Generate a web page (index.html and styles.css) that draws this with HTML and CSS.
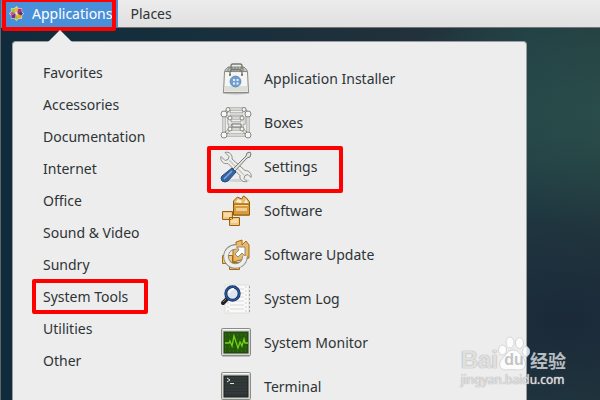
FILE: index.html
```html
<!DOCTYPE html>
<html lang="en">
  <head>
    <meta charset="UTF-8" />
    <title>Applications</title>
    <link rel="stylesheet" href="styles.css">
  </head>
  <body>
    <header class="panel">
      <button type="button" class="panel-button active marked">
        <svg class="logo" viewBox="0 0 16 16">
          <path d="M8 0l2.300 2.500H14V6l2 2-2 2v3.500h-3.700L8 16l-2.300-2.500H2V10L0 8l2-2V2.500h3.700z" fill="#f0dfc4" />
          <path d="M2.500 3H7v4.500H2.500z" fill="#a9c23c" />
          <path d="M9 3h4.500v4.500H9z" fill="#a8327f" />
          <path d="M2.500 8.500H7V13H2.500z" fill="#7a2f86" />
          <path d="M9 8.500h4.500V13H9z" fill="#efa724" />
          <path d="M8 1l2 2-2 4-2-4z" fill="#efb63a" />
          <path d="M15 8l-2 2-4-2 4-2z" fill="#5b2f84" />
          <path d="M8 15l-2-2 2-4 2 4z" fill="#a7bf3b" />
          <path d="M1 8l2-2 4 2-4 2z" fill="#c0589a" />
        </svg>
        Applications
      </button>
      <button type="button" class="panel-button">Places</button>
    </header>

    <main class="menu">
      <nav class="categories">
        <a href="#">Favorites</a>
        <a href="#">Accessories</a>
        <a href="#">Documentation</a>
        <a href="#">Internet</a>
        <a href="#">Office</a>
        <a href="#">Sound &amp; Video</a>
        <a href="#">Sundry</a>
        <a href="#" class="marked">System Tools</a>
        <a href="#">Utilities</a>
        <a href="#">Other</a>
      </nav>

      <nav class="apps">
        <a href="#">
          <svg viewBox="0 0 32 32">
            <ellipse cx="16" cy="30" rx="14" ry="1.5" fill="#b8b8b8" />
            <path d="M5 7l3-3h16l3 3v5H5z" fill="#c5c6c1" stroke="#8c8e88" />
            <path d="M8 5h16M7 7h18" stroke="#777a73" stroke-dasharray="2 1" />
            <path d="M11 6V3q0-2 2-2h7q2 0 2 2v3" fill="none" stroke="#777a73" stroke-width="1.4" />
            <path d="M4.500 8.500h23l1 21h-25z" fill="#eeeeec" stroke="#898b84" />
            <path d="M5.500 10h21l.8 18.500H4.700z" fill="#f5f5f3" />
            <path d="M5 23h22l.5 5.500h-23z" fill="#deded9" />
            <path d="M10 12V9q1-3 4-2.500h4q3-.5 4 2.500v3" fill="none" stroke="#777a73" stroke-width="1.400" />
            <circle cx="10" cy="12" r="1" fill="#666" />
            <circle cx="22" cy="12" r="1" fill="#666" />
            <circle cx="15.500" cy="18.500" r="5.400" fill="#729fcf" stroke="#5d8dc4" />
            <path d="M13 16h2v2h-2zM16.500 16h2v2h-2zM13 19.500h2v2h-2zM16.500 19.500h2v2h-2z" fill="#e6eef7" />
          </svg>
          Application Installer
        </a>
        <a href="#">
          <svg viewBox="0 0 32 32">
            <g fill="none" stroke="#8f918b" stroke-width="3">
              <path d="M4 7h24v21H4zM9 2h15v14H9zM10 11h12v11H10zM4 7l5-5M28 7l-4-5M4 28l6-6M28 28l-6-6M4 7l6 4M28 7l-6 4" />
            </g>
            <g fill="none" stroke="#eeeeec" stroke-width="1.500">
              <path d="M4 7h24v21H4zM9 2h15v14H9zM10 11h12v11H10zM4 7l5-5M28 7l-4-5M4 28l6-6M28 28l-6-6M4 7l6 4M28 7l-6 4" />
            </g>
            <path d="M12 17h9v3h-9z" fill="#eee" stroke="#777" />
            <g fill="#f6f6f4" stroke="#858780">
              <circle cx="4" cy="7" r="3" /><circle cx="28" cy="7" r="3" />
              <circle cx="4" cy="28" r="3" /><circle cx="28" cy="28" r="3" />
              <circle cx="8" cy="2.500" r="2" /><circle cx="24" cy="2.500" r="2" />
              <circle cx="10" cy="11" r="2" /><circle cx="22" cy="11" r="2" />
              <circle cx="10" cy="22" r="2" /><circle cx="22" cy="22" r="2" />
            </g>
          </svg>
          Boxes
        </a>
        <a href="#" class="marked">
          <svg viewBox="0 0 32 32">
            <ellipse cx="17" cy="29.500" rx="13" ry="1.500" fill="#d2d2d0" />
            <path d="M5 1.500l4 4-1 3-3 1-4-4c-1 4 2 8 7 7l12 12c-1 4 3 7 7 6l-3-3 1-3 3-1 3 3c1-4-2-7-6-7L12 8c1-4-3-8-7-6.500z" fill="#eeeeec" stroke="#8b8e88" />
            <path d="M9 9l15 15" stroke="#cacbc7" stroke-width="1.500" />
            <path d="M13 18L26 5l1-3 3-1 1 2-1 3-3 1-12 13z" fill="#e1e1de" stroke="#777a75" />
            <path d="M12 17l4 4-8 9q-3 2-6 0-2-3 0-5z" fill="#3465a4" stroke="#204a87" />
            <path d="M12 20l-8 8" stroke="#86aad5" stroke-width="1.500" />
          </svg>
          Settings
        </a>
        <a href="#">
          <svg viewBox="0 0 32 32">
            <path d="M13.500 20V6l4-4 4 2 2-3 3 2 3 4v13z" fill="#e9b96e" stroke="#8f5902" stroke-linejoin="round" />
            <path d="M16 7l2-3 4 2-1 2zM24 8l2-4 2 4z" fill="#fff0d2" />
            <path d="M13.500 9h16v11h-16z" fill="#d99b3c" stroke="#8f5902" />
            <path d="M15 10.500h13" stroke="#f7d79f" /><path d="M16 13h11v3H16z" fill="#efcf98" />
            <path d="M2.500 16.500h10v8h-10zM9.500 22.500h10v8h-10z" fill="#f0c580" stroke="#98610b" />
            <path d="M4 19h7M4 21h7M11 25h7M11 27h7" stroke="#fff0d2" />
          </svg>
          Software
        </a>
        <a href="#">
          <svg viewBox="0 0 32 32">
            <path d="M13 23V6h3V3l6-2v5l4-4 3 4v13z" fill="#e9b96e" stroke="#a76a0b" stroke-linejoin="round" />
            <path d="M2.500 16.500h10v8h-10zM9.500 23.500h10v7h-10z" fill="#f0c580" stroke="#a76a0b" />
            <path d="M16 8A9.500 9.500 0 1 0 25 17" fill="none" stroke="#898b85" stroke-width="5.500" />
            <path d="M16 8A9.500 9.500 0 1 0 25 17" fill="none" stroke="#eeeeec" stroke-width="3.700" />
            <path d="M17 8h8v9l-3-3-4 4-3-3 4-4z" fill="#fff" stroke="#898b85" />
          </svg>
          Software Update
        </a>
        <a href="#">
          <svg viewBox="0 0 32 32">
            <path d="M5 2h24v28H5z" fill="#f9f9f9" stroke="#dededc" />
            <path d="M29.500 3v27" stroke="#a4a69f" stroke-dasharray="2 2" />
            <path d="M26 3v27M8 3v27" stroke="#d1d1cf" stroke-dasharray="2 2" />
            <path d="M10 6h14M10 10h14M10 14h14M10 18h14M10 22h14M10 26h14" stroke="#d9d9d7" />
            <path d="M3 20l4-4" stroke="#222" stroke-width="4" stroke-linecap="round" />
            <path d="M3 19l4-4" stroke="#777" />
            <circle cx="12.500" cy="10.500" r="6.700" fill="#dce6ef" stroke="#18356f" stroke-width="3" />
            <circle cx="12.500" cy="10.500" r="6.800" fill="none" stroke="#3465a4" />
            <path d="M9 10q1-4 5-4" fill="none" stroke="#fff" stroke-width="2" />
          </svg>
          System Log
        </a>
        <a href="#">
          <svg viewBox="0 0 32 32">
            <rect x="2" y="28" width="28" height="2" rx="1" fill="#bcbcba" />
            <rect x="1.500" y="1.500" width="29" height="27" rx="1" fill="#d3d7cf" stroke="#888a85" />
            <path d="M3 2.500h26" stroke="#f7f7f6" />
            <rect x="4" y="5" width="24" height="21" fill="#245a09" stroke="#213d15" />
            <path d="M5 8h22M5 12h22M5 16h22M5 20h22M5 24h22" stroke="#40791e" stroke-dasharray="1 3" />
            <path d="M5 16h4l1-2 2 5 2-10 4 12 2-6 2 4 2-7 1 4h3" fill="none" stroke="#73d216" stroke-width="1.300" />
          </svg>
          System Monitor
        </a>
        <a href="#">
          <svg viewBox="0 0 32 32">
            <rect x="2" y="28" width="28" height="2" rx="1" fill="#bcbcba" />
            <rect x="1.500" y="1.500" width="29" height="27" rx="1" fill="#d3d7cf" stroke="#888a85" />
            <path d="M3 2.500h26" stroke="#f7f7f6" />
            <rect x="4" y="5" width="24" height="21" fill="#2e3436" stroke="#1e2423" />
            <path d="M5 7h22M5 10h22M5 13h22M5 16h22M5 19h22M5 22h22" stroke="#37433f" />
            <path d="M7 7l3 2-3 2M10 12.500h4" fill="none" stroke="#dfe5df" />
          </svg>
          Terminal
        </a>
      </nav>
    </main>

    <div class="watermark">
      <div class="brand">
        <span>Bai</span>
        <span class="paw">
          <svg viewBox="0 0 32 36">
            <ellipse cx="4.500" cy="14" rx="4" ry="5" />
            <ellipse cx="12" cy="6.500" rx="4" ry="5.500" />
            <ellipse cx="21.500" cy="7" rx="4" ry="5.500" />
            <ellipse cx="28" cy="15.500" rx="3.500" ry="5" />
            <path d="M15 14c5 0 7 4 10 8 4 4 3 12-4 12-3 0-9-1-13 0-7 0-8-7-4-11 4-4 6-9 11-9z" />
          </svg>
          <span class="du">du</span>
        </span>
        <span class="hanzi" lang="zh-CN">经验</span>
      </div>
      <div class="site">jingyan.baidu.com</div>
    </div>
  </body>
</html>
```

FILE: styles.css
```css
*,
*::after {
  box-sizing: border-box;
}

body {
  display: flex;
  flex-direction: column;
  height: 100vh;
  margin: 0;
  overflow: hidden;
  position: relative;
  border-left: 1px solid #626668;
  font-family: "Noto Sans", sans-serif;
  font-size: 14px;
  line-height: 20px;
  color: #2e3436;
  background:
    radial-gradient(ellipse at 100% 28%, #294d4b 0, rgba(41, 77, 75, 0) 28%),
    radial-gradient(ellipse at 94% 80%, #1b2939 0, rgba(27, 41, 57, 0) 40%),
    linear-gradient(90deg, #102b3c 0, #182f3c 35%, #22313b 70%, #213f45 88%, #253f40 100%);
}

/* top bar */
.panel {
  display: flex;
  flex: none;
  height: 28px;
  background: linear-gradient(#ececec, #e0e0e0);
  border-bottom: 1px solid #737373;
}

.panel-button {
  display: flex;
  align-items: center;
  gap: 8px;
  padding: 0 12px;
  border: none;
  background: none;
  color: inherit;
  font: inherit;
}

.panel-button.active {
  padding: 0 6px 0 8px;
  background: #4a90d9;
  color: #fff;
}

.logo {
  width: 15px;
  height: 15px;
}

/* menu */
.menu {
  position: relative;
  display: flex;
  flex: 1 0 auto;
  width: 86%;
  margin: 13px 0 0 11px;
  padding: 15px 0 0 30px;
  background: #ededed;
  border: 1px solid #999d9e;
  border-bottom: none;
  border-radius: 4px 4px 0 0;
}

.menu::before {
  content: "";
  position: absolute;
  top: -12px;
  left: 35px;
  border: 12px solid transparent;
  border-top: none;
  border-bottom-color: #ededed;
}

.menu a {
  display: flex;
  align-items: center;
  color: inherit;
  text-decoration: none;
}

.categories {
  width: 35%;
  margin-right: 8px;
}

.categories a {
  height: 32px;
}

.apps {
  flex: 1;
}

.apps a {
  height: 44px;
  gap: 12px;
}

.apps svg {
  width: 32px;
  height: 32px;
}

/* red frames */
.marked {
  position: relative;
}

.marked::after {
  content: "";
  position: absolute;
  border: 4px solid #f00;
  border-radius: 2px;
}

.panel .marked::after {
  inset: -2px 2px -4px 1px;
}

.categories .marked::after {
  top: -2px;
  bottom: -1px;
  left: -11px;
  width: 116px;
}

.apps .marked::after {
  top: 1px;
  bottom: -4px;
  left: -13px;
  width: 136px;
}

/* watermark */
.watermark {
  position: absolute;
  right: 34px;
  bottom: 12px;
  color: rgba(255, 255, 255, 0.7);
  font-family: "Liberation Sans", sans-serif;
  text-shadow: 0 0 1px #999, 0 0 1px #bbb;
}

.brand {
  display: flex;
  align-items: flex-end;
  font-size: 24px;
  font-weight: bold;
  line-height: 24px;
}

.paw {
  position: relative;
  width: 32px;
  height: 36px;
}

.paw svg {
  display: block;
  fill: rgba(255, 255, 255, 0.8);
  stroke: #d4d6d6;
}

.du {
  position: absolute;
  right: 0;
  bottom: 0;
  left: 0;
  text-align: center;
  font-size: 16px;
  color: #c3c5c6;
  text-shadow: none;
}

.hanzi {
  font-family: "Noto Sans CJK SC", sans-serif;
  font-size: 18px;
  text-shadow: none;
}

.site {
  font-family: "Noto Sans", sans-serif;
  font-size: 12px;
  line-height: 16px;
}
```
